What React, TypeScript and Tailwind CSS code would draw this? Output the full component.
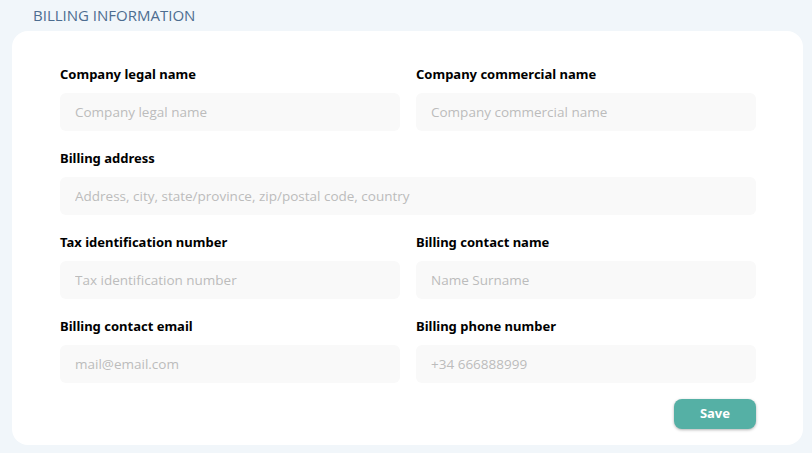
import { useState } from "react";

type Field = {
  id: string;
  label: string;
  placeholder: string;
  full?: boolean;
};

const FIELDS: Field[] = [
  { id: "legal", label: "Company legal name", placeholder: "Company legal name" },
  { id: "commercial", label: "Company commercial name", placeholder: "Company commercial name" },
  {
    id: "address",
    label: "Billing address",
    placeholder: "Address, city, state/province, zip/postal code, country",
    full: true,
  },
  { id: "tax", label: "Tax identification number", placeholder: "Tax identification number" },
  { id: "contact", label: "Billing contact name", placeholder: "Name Surname" },
  { id: "email", label: "Billing contact email", placeholder: "mail@email.com" },
  { id: "phone", label: "Billing phone number", placeholder: "+34 666888999" },
];

export default function App() {
  const [values, setValues] = useState<Record<string, string>>({});

  return (
    <div className="min-h-screen bg-[#f1f6fa] pl-3 pr-[9px] pb-2 font-['Open_Sans','Noto_Sans',sans-serif]">
      <h2 className="h-[31px] pl-[21px] pt-[4px] text-[15px] leading-[22px] text-[#4d6d90]">
        BILLING INFORMATION
      </h2>

      <div className="rounded-2xl bg-white pl-12 pr-[47px] pt-[34px] pb-4">
        <div className="grid grid-cols-2 gap-x-4 gap-y-[18px]">
          {FIELDS.map((f) => (
            <div key={f.id} className={f.full ? "col-span-2" : ""}>
              <label
                htmlFor={f.id}
                className="block text-[13px] font-bold leading-[18px] text-black font-['Noto_Sans','Open_Sans',sans-serif]"
              >
                {f.label}
              </label>
              <input
                id={f.id}
                value={values[f.id] ?? ""}
                onChange={(e) => setValues({ ...values, [f.id]: e.target.value })}
                placeholder={f.placeholder}
                className="mt-[10px] h-[38px] w-full rounded-md bg-[#f9f9f9] px-[15px] text-[13.5px] text-gray-700 outline-none placeholder:text-[#bcbcbc]"
              />
            </div>
          ))}
        </div>

        <div className="mt-4 flex justify-end">
          <button className="h-[30px] w-[82px] rounded-lg bg-[#55b0a5] text-[13px] font-bold text-white shadow-[0_1px_3px_rgba(0,0,0,0.3)] font-['Noto_Sans','Open_Sans',sans-serif]">
            Save
          </button>
        </div>
      </div>
    </div>
  );
}
